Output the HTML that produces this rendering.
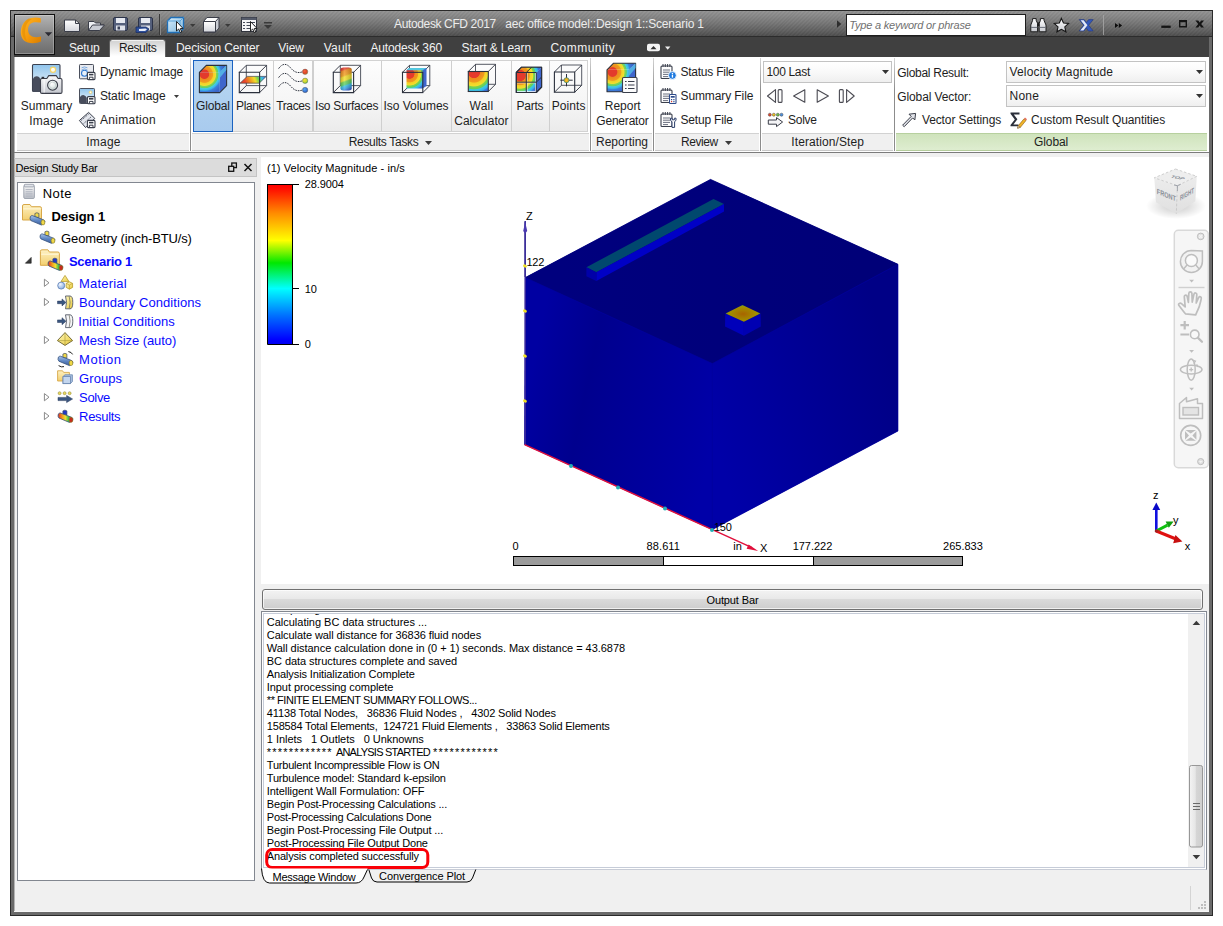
<!DOCTYPE html>
<html lang="en"><head><meta charset="utf-8"><title>Autodesk CFD 2017 - aec office model::Design 1::Scenario 1</title>
<style>
html,body{margin:0;padding:0;background:#fff;}
body{width:1223px;height:926px;position:relative;overflow:hidden;font-family:"Liberation Sans",sans-serif;}
#app,#app div,#app svg,#app .t{position:absolute;}
#app{left:0;top:0;width:1223px;height:926px;overflow:hidden;}
#app .t{white-space:pre;margin:0;padding:0;}
#app div.t span{position:static;}
svg{overflow:visible;display:block;}
</style></head><body><div id="app">
<div style="left:10px;top:10px;width:1203px;height:906px;background:#f0f0f0;"></div>
<div style="left:10px;top:10px;width:1203px;height:27px;background:linear-gradient(#969696 0,#8a8a8a 20%,#767676 50%,#5e5e5e 80%,#4a4a4a 100%);"></div>
<div style="left:10px;top:10px;width:1203px;height:27px;background:repeating-linear-gradient(135deg,rgba(0,0,0,.035) 0,rgba(0,0,0,.035) 1.4px,rgba(255,255,255,.02) 1.4px,rgba(255,255,255,.02) 2.8px);"></div>
<div style="left:10px;top:37px;width:1203px;height:20px;background:#404040;"></div>
<div style="left:10px;top:36px;width:1203px;height:1px;background:#2c2c2c;"></div>
<div style="left:10px;top:10px;width:1203px;height:1px;background:#2a2a2a;"></div>
<div style="left:10px;top:10px;width:1px;height:906px;background:#2a2a2a;"></div>
<div style="left:1212px;top:10px;width:1px;height:906px;background:#2a2a2a;"></div>
<div style="left:10px;top:915px;width:1203px;height:1px;background:#2a2a2a;"></div>
<div style="left:11px;top:37px;width:3px;height:878px;background:#6a6a6a;"></div>
<div style="left:1209px;top:37px;width:3px;height:878px;background:#6a6a6a;"></div>
<div style="left:11px;top:912px;width:1201px;height:3px;background:#6a6a6a;"></div>
<div style="left:14px;top:57px;width:1px;height:855px;background:#b4b4b4;"></div>
<div style="left:14px;top:911px;width:1195px;height:1px;background:#f6f6f6;"></div>
<div style="left:14px;top:37px;width:1px;height:20px;background:#404040;"></div>
<div style="left:14px;top:14px;width:41px;height:41px;background:linear-gradient(#b4b4b4,#8a8a8a 50%,#6c6c6c);border:1px solid #111;box-sizing:border-box;box-shadow:inset 0 0 0 1px rgba(255,255,255,.25);"></div>
<svg style="left:14px;top:14px" width="41" height="41" viewBox="0 0 41 41">
<defs><linearGradient id="gC" x1="0" y1="0" x2="1" y2="1"><stop offset="0" stop-color="#ffb627"/><stop offset=".55" stop-color="#f59a0c"/><stop offset="1" stop-color="#d97d00"/></linearGradient></defs>
<path d="M26.8 4.2 C20 2.2 10.5 3.8 7.6 13 C5.6 19.6 7.2 26.4 13.8 28.6 C18.6 30 23 29.2 27 27.6 L27 22.6 C23 23.4 18.6 23.6 16 21 C13.6 18.6 13.4 13.6 15.6 10.6 C18 7.6 22.6 8 26.8 8.6 Z" fill="url(#gC)"/>
<path d="M14.6 4.6 C9.4 7.6 7.4 14 8.4 20 C9 24 11 27 14 28.4 C10.6 24 10.4 17 12 12 C13 9 15 6.6 18 5 Z" fill="#e08a00" opacity=".55"/>
<path d="M30.800 18.300 L38.200 18.300 L34.500 22.300 Z" fill="#2b2b33"/>
</svg>
<svg style="left:60px;top:12px" width="220" height="24" viewBox="60 12 220 24">
<defs>
<linearGradient id="gW" x1="0" y1="0" x2="0" y2="1"><stop offset="0" stop-color="#ffffff"/><stop offset="1" stop-color="#d4d6dc"/></linearGradient>
<linearGradient id="gB" x1="0" y1="0" x2="1" y2="1"><stop offset="0" stop-color="#d9eefb"/><stop offset="1" stop-color="#7db6dd"/></linearGradient>
</defs>
<!-- new -->
<path d="M64.5 20 L75.5 20 L79.5 23.5 L79.5 31.5 L64.5 31.5 Z" fill="url(#gW)" stroke="#3a3d48" stroke-width="1"/>
<path d="M75.5 20 L75.5 23.5 L79.5 23.5" fill="none" stroke="#3a3d48" stroke-width="1"/>
<!-- open -->
<path d="M88.5 21.5 L94 21.5 L95.5 23 L100.5 23 L100.5 25 L104 25 L99.5 30.5 L88.5 30.5 Z" fill="#eef0f4" stroke="#3a3d48" stroke-width="1"/>
<path d="M92.5 25 L104.5 25 L99.5 30.5 L88.5 30.5 Z" fill="#c9ccd4" stroke="#3a3d48" stroke-width="1"/>
<!-- save -->
<rect x="113.5" y="17.5" width="14" height="13" rx="1.5" fill="#55607c" stroke="#2c3348"/>
<rect x="116" y="18" width="9" height="5" fill="#e6e9f0"/>
<rect x="116" y="25.5" width="9" height="5" fill="#dfe2ea"/>
<rect x="117.5" y="26.5" width="2.5" height="3" fill="#3a4259"/>
<!-- save as -->
<rect x="138.5" y="17.5" width="14" height="13" rx="1.5" fill="#55607c" stroke="#2c3348"/>
<rect x="141" y="18" width="9" height="5" fill="#e6e9f0"/>
<rect x="141" y="25.5" width="9" height="5" fill="#dfe2ea"/>
<path d="M136 27 L146 27 L149 29 L146 32.5 L136 32.5 Z" fill="#2d4f9a" stroke="#1b2e66" stroke-width=".8"/>
<path d="M139 29 L145.5 28.5 L147 29.6 L145 31 L139 31 Z" fill="#e8edf8"/>
<!-- separator -->
<rect x="159" y="14" width="1" height="21" fill="#3a3a3a"/><rect x="160" y="14" width="1" height="21" fill="#8a8a8a"/>
<!-- cube with cursor -->
<path d="M167.500 21 L171 17.500 L183.500 17.500 L183.500 28.500 L180 32.500 L167.500 32.500 Z" fill="url(#gB)" stroke="#1f6fb8" stroke-width="1.3"/>
<path d="M167.500 21 L180 21 L183.500 17.500 M180 21 L180 32.500" fill="none" stroke="#5aa2d8" stroke-width="1"/>
<path d="M176.500 21.500 L176.500 31 L178.700 29 L180.300 32.600 L181.800 32 L180.300 28.600 L183 28.400 Z" fill="#fff" stroke="#111" stroke-width=".9"/>
<path d="M190 24 L195.500 24 L192.750 27 Z" fill="#3a3a3a"/>
<!-- cube white -->
<path d="M203.500 21.500 L207 17.500 L219 17.500 L219 28 L215.500 32 L203.500 32 Z" fill="#c8cbd2" stroke="#3a3d48" stroke-width="1"/>
<path d="M203.500 21.500 L215.500 21.500 L215.500 32 L203.500 32 Z" fill="url(#gW)" stroke="#3a3d48" stroke-width="1"/>
<path d="M203.500 21.500 L207 17.500 L219 17.500 L215.500 21.500 Z" fill="#fdfdfd" stroke="#3a3d48" stroke-width="1"/>
<path d="M225 24 L230.500 24 L227.750 27 Z" fill="#3a3a3a"/>
<!-- list with cursor -->
<rect x="241.500" y="17.500" width="15" height="14" fill="#f4f4f6" stroke="#30333c"/>
<rect x="241.500" y="17.500" width="15" height="2.500" fill="#555b6a"/>
<path d="M243 22.500 H245 M246.500 22.500 H255 M243 25.500 H245 M246.500 25.500 H255 M243 28.500 H245 M246.500 28.500 H255" stroke="#444a58" stroke-width="1"/>
<path d="M250.500 21.500 L250.500 31 L252.700 29 L254.300 32.600 L255.800 32 L254.300 28.600 L257 28.400 Z" fill="#fff" stroke="#111" stroke-width=".9"/>
<!-- customize -->
<rect x="264" y="22" width="8" height="1.500" fill="#3a3a3a"/>
<path d="M264 25 L272 25 L268 29 Z" fill="#3a3a3a"/>
</svg>
<span class="t" style="top:16.0px;line-height:16px;font-size:12px;color:#ececec;letter-spacing:-0.374px;left:394.1px;">Autodesk CFD 2017</span>
<span class="t" style="top:16.0px;line-height:16px;font-size:12px;color:#ececec;letter-spacing:-0.177px;left:505.3px;">aec office model::Design 1::Scenario 1</span>
<svg style="left:836px;top:19px" width="6" height="10" viewBox="0 0 6 10"><path d="M1 1.200 L5.300 5 L1 8.800 Z" fill="#2e2e2e"/></svg>
<div style="left:846px;top:14px;width:180px;height:22px;background:#fff;border:1px solid #1e1e1e;box-sizing:border-box;"></div>
<span class="t" style="top:16.8px;line-height:16px;font-size:11px;color:#707070;font-style:italic;letter-spacing:-0.207px;left:849.3px;">Type a keyword or phrase</span>
<svg style="left:1028px;top:12px" width="180" height="24" viewBox="1028 12 180 24">
<defs><linearGradient id="gI" x1="0" y1="0" x2="0" y2="1"><stop offset="0" stop-color="#ffffff"/><stop offset="1" stop-color="#c8cad0"/></linearGradient></defs>
<!-- binoculars -->
<path d="M1030.800 31.800 L1030.800 25 L1032.600 20.400 L1032.600 18.600 L1036.200 18.600 L1036.200 20.400 L1037.600 23.400 L1037.600 31.800 Z" fill="url(#gI)" stroke="#1c1c1c" stroke-width="1"/>
<path d="M1039.200 31.800 L1039.200 23.400 L1040.400 20.400 L1040.400 18.600 L1044 18.600 L1044 20.400 L1046 25 L1046 31.800 Z" fill="url(#gI)" stroke="#1c1c1c" stroke-width="1"/>
<rect x="1037.400" y="22.400" width="2" height="3.600" fill="#1c1c1c"/>
<path d="M1031 27.400 H1037.400 M1039.400 27.400 H1045.800" stroke="#6a6e78" stroke-width="1"/>
<!-- star -->
<path d="M1061.400 18.400 L1063.500 23 L1068.600 23.500 L1064.800 26.900 L1065.900 31.800 L1061.400 29.300 L1056.900 31.800 L1058 26.900 L1054.200 23.500 L1059.300 23 Z" fill="url(#gI)" stroke="#161616" stroke-width="1.100" stroke-linejoin="miter"/>
<!-- X exchange -->
<path d="M1079.200 19.600 L1084.200 19.600 L1086.200 22.600 L1088.600 19.600 L1093.200 19.600 L1088.600 25.200 L1093.200 31 L1088.400 31 L1086.200 27.800 L1084 31 L1079.200 31 L1083.600 25.200 Z" fill="#3558b8" stroke="#22367c" stroke-width=".6"/>
<path d="M1080.200 30.400 L1084.600 25.200 L1080.600 20.200 L1083.600 20.200 L1087.400 25.200 L1083.400 30.400 Z" fill="#e4e9f6"/>
<!-- sep -->
<rect x="1103" y="15" width="1" height="20" fill="#a8a8a8" opacity=".8"/>
<!-- chevrons -->
<path d="M1115 23 L1118.300 25.500 L1115 28 Z M1118.800 23 L1122.100 25.500 L1118.800 28 Z" fill="#0c0c0c"/>
<!-- min max close -->
<rect x="1161.300" y="25.600" width="9.400" height="2.300" fill="#141414"/>
<path d="M1179 20 H1187 V27.500 H1179 Z M1180.400 22.200 V26.100 H1185.600 V22.200 Z" fill="#141414" fill-rule="evenodd"/>
<path d="M1195.400 20.600 H1198.300 L1199.700 22.600 L1201.100 20.600 H1204 L1201.200 24 L1204 27.400 H1201.100 L1199.700 25.400 L1198.300 27.400 H1195.400 L1198.200 24 Z" fill="#141414"/>
</svg>
<div style="left:110px;top:40px;width:55px;height:17px;background:linear-gradient(#ffffff 0,#d4d4d4 9%,#e4e4e4 40%,#ffffff 95%);border-radius:2.5px 2.5px 0 0;box-shadow:0 0 0 1px rgba(255,255,255,.18);"></div>
<span class="t" style="top:39.6px;line-height:16px;font-size:12px;color:#f2f2f2;letter-spacing:-0.152px;left:68.9px;">Setup</span>
<span class="t" style="top:39.6px;line-height:16px;font-size:12px;color:#1a1a1a;letter-spacing:-0.374px;left:118.9px;">Results</span>
<span class="t" style="top:39.6px;line-height:16px;font-size:12px;color:#f2f2f2;letter-spacing:-0.145px;left:176.1px;">Decision Center</span>
<span class="t" style="top:39.6px;line-height:16px;font-size:12px;color:#f2f2f2;letter-spacing:-0.049px;left:278.3px;">View</span>
<span class="t" style="top:39.6px;line-height:16px;font-size:12px;color:#f2f2f2;letter-spacing:0.226px;left:323.7px;">Vault</span>
<span class="t" style="top:39.6px;line-height:16px;font-size:12px;color:#f2f2f2;letter-spacing:-0.166px;left:370.5px;">Autodesk 360</span>
<span class="t" style="top:39.6px;line-height:16px;font-size:12px;color:#f2f2f2;letter-spacing:-0.086px;left:461.5px;">Start &amp; Learn</span>
<span class="t" style="top:39.6px;line-height:16px;font-size:12px;color:#f2f2f2;letter-spacing:0.457px;left:550.5px;">Community</span>
<svg style="left:646px;top:40px" width="26" height="14" viewBox="646 40 26 14">
<rect x="647" y="43.800" width="13" height="7.500" rx="2" fill="#f4f4f4"/>
<path d="M650.500 49.300 L653.500 46 L656.500 49.300 Z" fill="#303030"/>
<path d="M665 46.500 L670.400 46.500 L667.700 49.700 Z" fill="#f0f0f0"/>
</svg>
<div style="left:15px;top:57px;width:1194px;height:95px;background:#fff;"></div>
<div style="left:17px;top:133px;width:172px;height:18px;background:#f0f0f0;border-top:1px solid #d2d2d2;border-bottom:1px solid #c8c8c8;box-sizing:border-box;"></div>
<div style="left:192px;top:133px;width:397px;height:18px;background:#f0f0f0;border-top:1px solid #d2d2d2;border-bottom:1px solid #c8c8c8;box-sizing:border-box;"></div>
<div style="left:592px;top:133px;width:60px;height:18px;background:#f0f0f0;border-top:1px solid #d2d2d2;border-bottom:1px solid #c8c8c8;box-sizing:border-box;"></div>
<div style="left:655px;top:133px;width:104px;height:18px;background:#f0f0f0;border-top:1px solid #d2d2d2;border-bottom:1px solid #c8c8c8;box-sizing:border-box;"></div>
<div style="left:762px;top:133px;width:131px;height:18px;background:#f0f0f0;border-top:1px solid #d2d2d2;border-bottom:1px solid #c8c8c8;box-sizing:border-box;"></div>
<div style="left:896px;top:133px;width:311px;height:18px;background:linear-gradient(#cfe3bc,#deedd0);border-top:1px solid #b7d09f;border-bottom:1px solid #b4cc9c;box-sizing:border-box;"></div>
<div style="left:14px;top:152px;width:1195px;height:1px;background:#7c7c7c;"></div>
<div style="left:190px;top:58px;width:1px;height:93px;background:linear-gradient(#d4d4d4,#8c8c8c 35%);"></div>
<div style="left:590px;top:58px;width:1px;height:93px;background:linear-gradient(#d4d4d4,#8c8c8c 35%);"></div>
<div style="left:653px;top:58px;width:1px;height:93px;background:linear-gradient(#d4d4d4,#8c8c8c 35%);"></div>
<div style="left:760px;top:58px;width:1px;height:93px;background:linear-gradient(#d4d4d4,#8c8c8c 35%);"></div>
<div style="left:894px;top:58px;width:1px;height:93px;background:linear-gradient(#d4d4d4,#8c8c8c 35%);"></div>
<div style="left:193px;top:60px;width:395px;height:72px;background:linear-gradient(#fdfdfd,#f6f6f6 55%,#ebebeb);border:1px solid #d2d2d2;box-sizing:border-box;"></div>
<div style="left:272.5px;top:61px;width:1.5px;height:70px;background:#cfcfcf;"></div>
<div style="left:312.0px;top:61px;width:1.5px;height:70px;background:#cfcfcf;"></div>
<div style="left:380.5px;top:61px;width:1.5px;height:70px;background:#cfcfcf;"></div>
<div style="left:450.5px;top:61px;width:1.5px;height:70px;background:#cfcfcf;"></div>
<div style="left:510.5px;top:61px;width:1.5px;height:70px;background:#cfcfcf;"></div>
<div style="left:548.5px;top:61px;width:1.5px;height:70px;background:#cfcfcf;"></div>
<div style="left:193px;top:60px;width:40px;height:72px;background:linear-gradient(#bcd8f3,#b0d1f0 50%,#a9cbee);border:1px solid #1a62c0;box-sizing:border-box;"></div>
<span class="t" style="top:97.8px;line-height:16px;font-size:12px;color:#1e1e1e;letter-spacing:0.022px;left:20.7px;">Summary</span>
<span class="t" style="top:112.5px;line-height:16px;font-size:12px;color:#1e1e1e;letter-spacing:0.248px;left:29.2px;">Image</span>
<span class="t" style="top:97.8px;line-height:16px;font-size:12px;color:#1e1e1e;letter-spacing:-0.165px;left:196.0px;">Global</span>
<span class="t" style="top:97.8px;line-height:16px;font-size:12px;color:#1e1e1e;letter-spacing:-0.417px;left:236.1px;">Planes</span>
<span class="t" style="top:97.8px;line-height:16px;font-size:12px;color:#1e1e1e;letter-spacing:-0.372px;left:276.2px;">Traces</span>
<span class="t" style="top:97.8px;line-height:16px;font-size:12px;color:#1e1e1e;letter-spacing:-0.300px;left:315.1px;">Iso Surfaces</span>
<span class="t" style="top:97.8px;line-height:16px;font-size:12px;color:#1e1e1e;letter-spacing:-0.034px;left:383.5px;">Iso Volumes</span>
<span class="t" style="top:97.8px;line-height:16px;font-size:12px;color:#1e1e1e;letter-spacing:0.277px;left:469.5px;">Wall</span>
<span class="t" style="top:112.5px;line-height:16px;font-size:12px;color:#1e1e1e;letter-spacing:0.037px;left:454.2px;">Calculator</span>
<span class="t" style="top:97.8px;line-height:16px;font-size:12px;color:#1e1e1e;letter-spacing:-0.263px;left:516.5px;">Parts</span>
<span class="t" style="top:97.8px;line-height:16px;font-size:12px;color:#1e1e1e;letter-spacing:0.057px;left:551.8px;">Points</span>
<span class="t" style="top:97.8px;line-height:16px;font-size:12px;color:#1e1e1e;letter-spacing:-0.022px;left:604.8px;">Report</span>
<span class="t" style="top:112.5px;line-height:16px;font-size:12px;color:#1e1e1e;letter-spacing:-0.203px;left:596.3px;">Generator</span>
<span class="t" style="top:63.8px;line-height:16px;font-size:12px;color:#1e1e1e;left:99.9px;">Dynamic Image</span>
<span class="t" style="top:88.0px;line-height:16px;font-size:12px;color:#1e1e1e;letter-spacing:-0.092px;left:99.9px;">Static Image</span>
<span class="t" style="top:112.0px;line-height:16px;font-size:12px;color:#1e1e1e;letter-spacing:0.314px;left:99.9px;">Animation</span>
<span class="t" style="top:63.8px;line-height:16px;font-size:12px;color:#1e1e1e;letter-spacing:-0.246px;left:680.5px;">Status File</span>
<span class="t" style="top:88.0px;line-height:16px;font-size:12px;color:#1e1e1e;letter-spacing:-0.101px;left:680.5px;">Summary File</span>
<span class="t" style="top:112.0px;line-height:16px;font-size:12px;color:#1e1e1e;letter-spacing:-0.183px;left:680.5px;">Setup File</span>
<span class="t" style="top:112.0px;line-height:16px;font-size:12px;color:#1e1e1e;letter-spacing:-0.306px;left:788.1px;">Solve</span>
<span class="t" style="top:65.2px;line-height:16px;font-size:12px;color:#1e1e1e;letter-spacing:-0.270px;left:897.2px;">Global Result:</span>
<span class="t" style="top:89.2px;line-height:16px;font-size:12px;color:#1e1e1e;letter-spacing:-0.098px;left:897.2px;">Global Vector:</span>
<span class="t" style="top:112.0px;line-height:16px;font-size:12px;color:#1e1e1e;letter-spacing:-0.095px;left:921.9px;">Vector Settings</span>
<span class="t" style="top:112.0px;line-height:16px;font-size:12px;color:#1e1e1e;letter-spacing:-0.086px;left:1031.1px;">Custom Result Quantities</span>
<span class="t" style="top:134.0px;line-height:16px;font-size:12px;color:#1e1e1e;letter-spacing:0.208px;left:86.3px;">Image</span>
<span class="t" style="top:134.0px;line-height:16px;font-size:12px;color:#1e1e1e;letter-spacing:-0.309px;left:348.7px;">Results Tasks</span>
<span class="t" style="top:134.0px;line-height:16px;font-size:12px;color:#1e1e1e;left:596.0px;">Reporting</span>
<span class="t" style="top:134.0px;line-height:16px;font-size:12px;color:#1e1e1e;letter-spacing:-0.393px;left:680.9px;">Review</span>
<span class="t" style="top:134.0px;line-height:16px;font-size:12px;color:#1e1e1e;letter-spacing:0.101px;left:791.3px;">Iteration/Step</span>
<span class="t" style="top:134.0px;line-height:16px;font-size:12px;color:#1e1e1e;letter-spacing:-0.115px;left:1034.1px;">Global</span>
<svg style="left:424.5px;top:140.5px" width="7" height="4" viewBox="0 0 7 4"><path d="M0 0 L7 0 L3.5 4 Z" fill="#3c3c3c"/></svg>
<svg style="left:724.5px;top:140.5px" width="7" height="4" viewBox="0 0 7 4"><path d="M0 0 L7 0 L3.5 4 Z" fill="#3c3c3c"/></svg>
<svg style="left:173.5px;top:94.5px" width="5" height="3" viewBox="0 0 5 3"><path d="M0 0 L5 0 L2.5 3 Z" fill="#3c3c3c"/></svg>
<div style="left:763px;top:61px;width:129px;height:22px;background:linear-gradient(#ffffff,#f9f9f9 50%,#efefef);border:1px solid #c3c3c3;box-sizing:border-box;"></div>
<span class="t" style="top:63.8px;line-height:16px;font-size:12px;color:#1e1e1e;letter-spacing:-0.331px;left:766.5px;">100 Last</span>
<svg style="left:882px;top:70.0px" width="7" height="4" viewBox="0 0 7 4"><path d="M0 0 L7 0 L3.5 4 Z" fill="#333"/></svg>
<div style="left:1006px;top:61px;width:200px;height:22px;background:linear-gradient(#ffffff,#f9f9f9 50%,#efefef);border:1px solid #c3c3c3;box-sizing:border-box;"></div>
<span class="t" style="top:63.8px;line-height:16px;font-size:12px;color:#1e1e1e;letter-spacing:0.165px;left:1009.5px;">Velocity Magnitude</span>
<svg style="left:1196px;top:70.0px" width="7" height="4" viewBox="0 0 7 4"><path d="M0 0 L7 0 L3.5 4 Z" fill="#333"/></svg>
<div style="left:1006px;top:85px;width:200px;height:22px;background:linear-gradient(#ffffff,#f9f9f9 50%,#efefef);border:1px solid #c3c3c3;box-sizing:border-box;"></div>
<span class="t" style="top:87.8px;line-height:16px;font-size:12px;color:#1e1e1e;letter-spacing:0.228px;left:1009.5px;">None</span>
<svg style="left:1196px;top:94.0px" width="7" height="4" viewBox="0 0 7 4"><path d="M0 0 L7 0 L3.5 4 Z" fill="#333"/></svg>
<svg style="left:15px;top:57px" width="1193" height="95" viewBox="15 57 1193 95">
<defs>
<radialGradient id="rGlobal" gradientUnits="userSpaceOnUse" cx="204.4" cy="74.2" r="20.5"><stop offset="0" stop-color="#e33a2c"/><stop offset=".21" stop-color="#e33a2c"/><stop offset=".25" stop-color="#ec8a1e"/><stop offset=".40" stop-color="#f09c20"/><stop offset=".44" stop-color="#f2d028"/><stop offset=".55" stop-color="#f0de30"/><stop offset=".59" stop-color="#86d450"/><stop offset=".66" stop-color="#62d068"/><stop offset=".70" stop-color="#48cce0"/><stop offset=".78" stop-color="#3ab8ea"/><stop offset=".84" stop-color="#3c80dc"/><stop offset="1" stop-color="#3c66c8"/></radialGradient>
<radialGradient id="rIsoV" gradientUnits="userSpaceOnUse" cx="409.5" cy="73.8" r="19.5"><stop offset="0" stop-color="#e53a2c"/><stop offset=".24" stop-color="#e53a2c"/><stop offset=".27" stop-color="#ee8a1c"/><stop offset=".42" stop-color="#f09a1e"/><stop offset=".46" stop-color="#f4d026"/><stop offset=".58" stop-color="#f2de2c"/><stop offset=".62" stop-color="#7fd24a"/><stop offset=".70" stop-color="#5fd060"/><stop offset=".74" stop-color="#3fc8e0"/><stop offset=".83" stop-color="#35b4ea"/><stop offset=".88" stop-color="#3a78dc"/><stop offset="1" stop-color="#3a62c8"/></radialGradient>
<radialGradient id="rWall" gradientUnits="userSpaceOnUse" cx="474" cy="72" r="24"><stop offset="0" stop-color="#e53a2c"/><stop offset=".24" stop-color="#e53a2c"/><stop offset=".27" stop-color="#ee8a1c"/><stop offset=".42" stop-color="#f09a1e"/><stop offset=".46" stop-color="#f4d026"/><stop offset=".58" stop-color="#f2de2c"/><stop offset=".62" stop-color="#7fd24a"/><stop offset=".70" stop-color="#5fd060"/><stop offset=".74" stop-color="#3fc8e0"/><stop offset=".83" stop-color="#35b4ea"/><stop offset=".88" stop-color="#3a78dc"/><stop offset="1" stop-color="#3a62c8"/></radialGradient>
<radialGradient id="rParts" gradientUnits="userSpaceOnUse" cx="520" cy="75.5" r="22"><stop offset="0" stop-color="#e53a2c"/><stop offset=".24" stop-color="#e53a2c"/><stop offset=".27" stop-color="#ee8a1c"/><stop offset=".42" stop-color="#f09a1e"/><stop offset=".46" stop-color="#f4d026"/><stop offset=".58" stop-color="#f2de2c"/><stop offset=".62" stop-color="#7fd24a"/><stop offset=".70" stop-color="#5fd060"/><stop offset=".74" stop-color="#3fc8e0"/><stop offset=".83" stop-color="#35b4ea"/><stop offset=".88" stop-color="#3a78dc"/><stop offset="1" stop-color="#3a62c8"/></radialGradient>
<radialGradient id="rRep" gradientUnits="userSpaceOnUse" cx="612.5" cy="72" r="21"><stop offset="0" stop-color="#e33a2c"/><stop offset=".21" stop-color="#e33a2c"/><stop offset=".25" stop-color="#ec8a1e"/><stop offset=".40" stop-color="#f09c20"/><stop offset=".44" stop-color="#f2d028"/><stop offset=".55" stop-color="#f0de30"/><stop offset=".59" stop-color="#86d450"/><stop offset=".66" stop-color="#62d068"/><stop offset=".70" stop-color="#48cce0"/><stop offset=".78" stop-color="#3ab8ea"/><stop offset=".84" stop-color="#3c80dc"/><stop offset="1" stop-color="#3c66c8"/></radialGradient>
<linearGradient id="lSky" x1="0" y1="0" x2="0" y2="1"><stop offset="0" stop-color="#8fc4ec"/><stop offset=".7" stop-color="#dcebf8"/><stop offset="1" stop-color="#f2f6fb"/></linearGradient>
<linearGradient id="lCam" x1="0" y1="0" x2="0" y2="1"><stop offset="0" stop-color="#fafafb"/><stop offset="1" stop-color="#c4c7ce"/></linearGradient>
<linearGradient id="lCyl" gradientUnits="userSpaceOnUse" x1="342" y1="66" x2="351" y2="91"><stop offset="0" stop-color="#e0342a"/><stop offset=".14" stop-color="#e23a2c"/><stop offset=".2" stop-color="#ee8a1e"/><stop offset=".36" stop-color="#f0a020"/><stop offset=".42" stop-color="#f2dc2a"/><stop offset=".54" stop-color="#f0e030"/><stop offset=".6" stop-color="#6fd050"/><stop offset=".7" stop-color="#58cc70"/><stop offset=".75" stop-color="#38bfe6"/><stop offset=".85" stop-color="#3a9ae0"/><stop offset=".9" stop-color="#3a70d8"/><stop offset="1" stop-color="#3a5ec4"/></linearGradient>
<linearGradient id="lCylS" x1="0" y1="0" x2="1" y2="0"><stop offset="0" stop-color="#000" stop-opacity=".18"/><stop offset=".35" stop-color="#fff" stop-opacity=".18"/><stop offset="1" stop-color="#000" stop-opacity=".22"/></linearGradient>
<linearGradient id="lPlane" gradientUnits="userSpaceOnUse" x1="246" y1="84" x2="264" y2="76"><stop offset="0" stop-color="#e8452c"/><stop offset=".3" stop-color="#f0a020"/><stop offset=".5" stop-color="#f2dc2a"/><stop offset=".68" stop-color="#6fd050"/><stop offset=".85" stop-color="#38bfe6"/><stop offset="1" stop-color="#4a8ae0"/></linearGradient>
<radialGradient id="bR" cx=".4" cy=".35" r=".7"><stop offset="0" stop-color="#f26a3a"/><stop offset=".6" stop-color="#e0402a"/><stop offset="1" stop-color="#c98a20"/></radialGradient>
<radialGradient id="bY" cx=".4" cy=".35" r=".7"><stop offset="0" stop-color="#f4e23a"/><stop offset=".6" stop-color="#c8d630"/><stop offset="1" stop-color="#4fb848"/></radialGradient>
<radialGradient id="bB" cx=".4" cy=".35" r=".7"><stop offset="0" stop-color="#58a8f0"/><stop offset=".6" stop-color="#3a78d8"/><stop offset="1" stop-color="#2a58b0"/></radialGradient>
<radialGradient id="bP" cx=".5" cy=".5" r=".6"><stop offset="0" stop-color="#f4d42a"/><stop offset=".5" stop-color="#f0a020"/><stop offset=".8" stop-color="#5fd060"/><stop offset="1" stop-color="#38a0e6"/></radialGradient>
<radialGradient id="lens" cx=".4" cy=".35" r=".7"><stop offset="0" stop-color="#ffffff"/><stop offset=".6" stop-color="#dfe8e6"/><stop offset="1" stop-color="#b8c4c2"/></radialGradient>
</defs>
<rect x="32.5" y="64.5" width="27.500" height="27" rx="1" fill="url(#lSky)" stroke="#3c4150" stroke-width="1.1"/>
<path d="M33 92 L33 78.500 Q34.500 76 37 76.200 Q39.500 76.500 40.300 79 L40.300 92 Z" fill="#474c5c"/>
<circle cx="53" cy="69.800" r="2.600" fill="#fffdf0" stroke="#f3d469" stroke-width="1.200"/>
<path d="M40.500 80 Q40.500 78.500 42 78.500 L46.800 78.500 L48.800 75.600 L56.200 75.600 L58.200 78.500 L60.500 78.500 Q62 78.500 62 80 L62 92 Q62 93.400 60.500 93.400 L42 93.400 Q40.500 93.400 40.500 92 Z" fill="url(#lCam)" stroke="#3a3d48" stroke-width="1.1"/>
<rect x="41.600" y="76.800" width="2.600" height="1.800" fill="#2d303a"/>
<rect x="43.600" y="79.500" width="1.100" height="13" fill="#fff" opacity=".8"/>
<circle cx="52.600" cy="85.200" r="5" fill="url(#lens)" stroke="#3a3d48" stroke-width="1.1"/>
<circle cx="52.600" cy="85.200" r="3.100" fill="none" stroke="#c2ccca" stroke-width=".7"/>
<rect x="79.500" y="64.500" width="14" height="14.300" rx=".8" fill="#e9ebf0" stroke="#4a4f5c" stroke-width="1"/>
<circle cx="84.500" cy="73.300" r="3" fill="#e6f0fb" stroke="#2f78d0" stroke-width="1.1"/>
<path d="M81.400 70.200 A4.600 4.600 0 0 1 87.600 70.200 M81.600 67.800 A5.600 5.600 0 0 1 87.400 67.800" fill="none" stroke="#6fa4e0" stroke-width=".9"/>
<rect x="87.4" y="72.4" width="7.6" height="7.2" rx="1" fill="#fff" stroke="#3a3f4c" stroke-width="1.1"/><rect x="89.0" y="73.80000000000001" width="4.4" height="1.6" fill="#3a3f4c"/><path d="M89.4 79.4 L89.4 77.2 L93.0 77.2 L93.0 79.4" fill="none" stroke="#3a3f4c" stroke-width="1"/>
<rect x="79.500" y="88.500" width="15" height="15" rx=".8" fill="url(#lSky)" stroke="#4a4f5c" stroke-width="1"/>
<path d="M80 103 L80 97 Q81.500 94.600 84 95.200 Q86 95.800 86.800 98 L86.800 103 Z" fill="#474c5c"/>
<circle cx="90.500" cy="92.300" r="1.300" fill="#fffdf0" stroke="#f0cf5c" stroke-width=".8"/>
<rect x="87.4" y="96.6" width="7.6" height="7.2" rx="1" fill="#fff" stroke="#3a3f4c" stroke-width="1.1"/><rect x="89.0" y="98.0" width="4.4" height="1.6" fill="#3a3f4c"/><path d="M89.4 103.6 L89.4 101.39999999999999 L93.0 101.39999999999999 L93.0 103.6" fill="none" stroke="#3a3f4c" stroke-width="1"/>
<path d="M79.400 120.500 L88.600 112.400 L94.800 118.400 L85.600 127.600 Z" fill="#e4e7ee" stroke="#3a3f4c" stroke-width="1" stroke-linejoin="round"/>
<path d="M81.200 120.400 L88.700 114 M83.600 123.600 L91.600 116.400" fill="none" stroke="#3a3f4c" stroke-width=".9" stroke-dasharray="1.2 1"/>
<rect x="87.4" y="120.4" width="7.6" height="7.2" rx="1" fill="#fff" stroke="#3a3f4c" stroke-width="1.1"/><rect x="89.0" y="121.80000000000001" width="4.4" height="1.6" fill="#3a3f4c"/><path d="M89.4 127.4 L89.4 125.2 L93.0 125.2 L93.0 127.4" fill="none" stroke="#3a3f4c" stroke-width="1"/>
<path d="M199.4 72.3 L206.3 65.39999999999999 L226.60000000000002 65.39999999999999 L219.70000000000002 72.3 Z" fill="url(#rGlobal)"/><path d="M219.70000000000002 72.3 L226.60000000000002 65.39999999999999 L226.60000000000002 85.69999999999999 L219.70000000000002 92.6 Z" fill="#3f66cc"/><rect x="199.4" y="72.3" width="20.3" height="20.3" fill="url(#rGlobal)"/><path d="M199.4 72.3 L206.3 65.39999999999999 L226.60000000000002 65.39999999999999 L226.60000000000002 85.69999999999999 L219.70000000000002 92.6 L199.4 92.6 Z" fill="none" stroke="#2b303c" stroke-width="1.1" stroke-linejoin="round"/>
<path d="M219.700 72.300 L226.300 65.400 L226.300 70 L219.700 78 Z" fill="#56c0e8" opacity=".8"/>
<g fill="none" stroke="#2b303c" stroke-width="1.1" stroke-linejoin="round"><rect x="246.3" y="65.3" width="20.3" height="20.3" stroke-width=".8"/><path d="M239.3 92.6 L246.3 85.6 M239.3 72.3 L246.3 65.3 M259.6 72.3 L266.6 65.3 M259.6 92.6 L266.6 85.6" stroke-width=".9"/></g>
<path d="M240 83.200 L247.200 76.400 L266.200 76.400 L259.200 83.200 Z" fill="url(#lPlane)" stroke="#2b303c" stroke-width=".6"/>
<path d="M239.300 72.300 h20.300 v20.300 h-20.300 Z" fill="none" stroke="#2b303c" stroke-width="1.1"/>
<path d="M278.600 68.6 C282.500 63.099999999999994 286.500 63.099999999999994 290.500 67.8 C294.500 72.6 298 73.39999999999999 302.500 71.8" fill="none" stroke="#2b303c" stroke-width="1" stroke-dasharray="1.6 1"/>
<circle cx="305.100" cy="71.8" r="2.700" fill="url(#bR)" stroke="#555" stroke-width=".4"/>
<path d="M278.600 77.6 C282.500 72.1 286.500 72.1 290.500 76.8 C294.500 81.6 298 82.39999999999999 302.500 80.8" fill="none" stroke="#2b303c" stroke-width="1" stroke-dasharray="1.6 1"/>
<circle cx="305.100" cy="80.8" r="2.700" fill="url(#bY)" stroke="#555" stroke-width=".4"/>
<path d="M278.600 86.8 C282.500 81.3 286.500 81.3 290.500 86.0 C294.500 90.8 298 91.6 302.500 90" fill="none" stroke="#2b303c" stroke-width="1" stroke-dasharray="1.6 1"/>
<circle cx="305.100" cy="90" r="2.700" fill="url(#bB)" stroke="#555" stroke-width=".4"/>
<g fill="none" stroke="#2b303c" stroke-width="1.1" stroke-linejoin="round"><rect x="340.3" y="65.3" width="20.3" height="20.3" stroke-width=".8"/><path d="M333.3 92.6 L340.3 85.6 M333.3 72.3 L340.3 65.3 M353.6 72.3 L360.6 65.3 M353.6 92.6 L360.6 85.6" stroke-width=".9"/></g>
<rect x="340.500" y="67.400" width="11.200" height="23" rx="3.200" ry="2.200" fill="url(#lCyl)"/>
<rect x="340.500" y="67.400" width="11.200" height="23" rx="3.200" ry="2.200" fill="url(#lCylS)"/>
<path d="M340.500 72.300 H333.300 V92.600 H353.600 V72.300 H351.700" fill="none" stroke="#2b303c" stroke-width="1.1"/>
<g fill="none" stroke="#2b303c" stroke-width="1.1" stroke-linejoin="round"><rect x="409.5" y="65.3" width="20.3" height="20.3" stroke-width=".8"/><path d="M402.5 92.6 L409.5 85.6 M402.5 72.3 L409.5 65.3 M422.8 72.3 L429.8 65.3 M422.8 92.6 L429.8 85.6" stroke-width=".9"/></g>
<path d="M406.500 70.300 L409 68 L426.500 68 L426.500 86 L422.600 88.500 Z" fill="#3f66cc"/>
<path d="M406.500 70.300 L409 68 L426.500 68 L422.600 70.300 Z" fill="#52c8e0"/>
<rect x="406.500" y="70.300" width="16.100" height="18.200" fill="url(#rIsoV)"/>
<rect x="402.500" y="72.300" width="20.300" height="20.300" fill="none" stroke="#2b303c" stroke-width="1.1"/>
<g fill="none" stroke="#2b303c" stroke-width="1.1" stroke-linejoin="round"><rect x="475.5" y="64.3" width="20" height="20" stroke-width=".8"/><path d="M468.3 91.5 L475.5 84.3 M468.3 71.5 L475.5 64.3 M488.3 71.5 L495.5 64.3 M488.3 91.5 L495.5 84.3" stroke-width=".9"/></g>
<rect x="468.300" y="71.500" width="20" height="20" fill="url(#rWall)" stroke="#2b303c" stroke-width="1.1"/>
<path d="M516.3 72.5 L521.5999999999999 67.2 L541.5999999999999 67.2 L536.3 72.5 Z" fill="url(#rParts)"/><path d="M536.3 72.5 L541.5999999999999 67.2 L541.5999999999999 87.2 L536.3 92.5 Z" fill="#3f66cc"/><rect x="516.3" y="72.5" width="20" height="20" fill="url(#rParts)"/><path d="M516.3 72.5 L521.5999999999999 67.2 L541.5999999999999 67.2 L541.5999999999999 87.2 L536.3 92.5 L516.3 92.5 Z" fill="none" stroke="#2b303c" stroke-width="1.1" stroke-linejoin="round"/>
<path d="M516.300 72.500 L521.600 67.200 L541.600 67.200 L536.300 72.500 Z" fill="url(#rParts)"/>
<path d="M527 73 V91.600 M517 82.800 H536 M535.600 73 V91.600 M517 91.400 H536" stroke="#fff" stroke-width="1" opacity=".85" fill="none"/>
<path d="M526.300 72.500 V92.500 M516.300 82.200 H536.300 M526.300 72.500 L531.600 67.200 M536.300 82.200 L541.600 77 M516.300 72.500 H536.300 V92.500" stroke="#2b303c" stroke-width="1" fill="none"/>
<path d="M516.300 72.500 L521.600 67.200 L541.600 67.200 L541.600 87.200 L536.300 92.500 L516.300 92.500 Z" fill="none" stroke="#2b303c" stroke-width="1.1" stroke-linejoin="round"/>
<g fill="none" stroke="#2b303c" stroke-width="1.1" stroke-linejoin="round"><rect x="561.4" y="65" width="20.3" height="20.3" stroke-width=".8"/><path d="M554.4 92.3 L561.4 85.3 M554.4 72 L561.4 65 M574.6999999999999 72 L581.6999999999999 65 M574.6999999999999 92.3 L581.6999999999999 85.3" stroke-width=".9"/><rect x="554.4" y="72" width="20.3" height="20.3"/></g>
<path d="M560.300 80.200 H572.700 M566.500 74 V86.400" stroke="#2b303c" stroke-width="1"/>
<circle cx="566.500" cy="80.200" r="2.600" fill="url(#bP)" stroke="#555" stroke-width=".4"/>
<path d="M607 69.8 L613.6 63.199999999999996 L635.6 63.199999999999996 L629 69.8 Z" fill="url(#rRep)"/><path d="M629 69.8 L635.6 63.199999999999996 L635.6 85.2 L629 91.8 Z" fill="#3f66cc"/><rect x="607" y="69.8" width="22" height="22" fill="url(#rRep)"/><path d="M607 69.8 L613.6 63.199999999999996 L635.6 63.199999999999996 L635.6 85.2 L629 91.8 L607 91.8 Z" fill="none" stroke="#2b303c" stroke-width="1.1" stroke-linejoin="round"/>
<path d="M629 69.800 L635.600 63.200 L635.600 68 L629 76 Z" fill="#56c0e8" opacity=".8"/>
<rect x="622.500" y="77.500" width="14.500" height="15" rx="1" fill="#fbfbfc" stroke="#3a3f4c" stroke-width="1.1"/>
<path d="M625 81.500 h1.600 M628 81.500 h6.500 M625 85 h1.600 M628 85 h6.500 M625 88.500 h1.600 M628 88.500 h6.500" stroke="#3a3f4c" stroke-width="1.1"/>
<rect x="661" y="66" width="11" height="12.5" rx="1" fill="#fdfdfd" stroke="#3a3f4c" stroke-width="1.1"/><path d="M663 64 V67 M665.3 64 V67 M667.6 64 V67 M669.9 64 V67" stroke="#3a3f4c" stroke-width="1"/><path d="M663 70 H670 M663 72.2 H670 M663 74.4 H670 M663 76.6 H668" stroke="#5a6070" stroke-width=".9"/>
<circle cx="672.400" cy="75.400" r="3.900" fill="#1f7ae0" stroke="#fff" stroke-width=".8"/><rect x="671.800" y="74.600" width="1.300" height="3" fill="#fff"/><rect x="671.800" y="72.800" width="1.300" height="1.200" fill="#fff"/>
<rect x="661" y="90" width="11" height="12.5" rx="1" fill="#fdfdfd" stroke="#3a3f4c" stroke-width="1.1"/><path d="M663 88 V91 M665.3 88 V91 M667.6 88 V91 M669.9 88 V91" stroke="#3a3f4c" stroke-width="1"/><path d="M663 94 H670 M663 96.2 H670 M663 98.4 H670 M663 100.6 H668" stroke="#5a6070" stroke-width=".9"/>
<rect x="669.500" y="94.500" width="6.500" height="9" rx=".8" fill="#fff" stroke="#2d4a8a" stroke-width="1.100"/><rect x="670.800" y="96" width="3.900" height="1.700" fill="#2d4a8a"/><path d="M671 99.600 h1.200 M673.300 99.600 h1.200 M673.300 101.600 h1.200" stroke="#2d4a8a" stroke-width="1.100"/><rect x="671" y="101" width="1.200" height="1.200" fill="#d8382c"/>
<rect x="661" y="114" width="11" height="12.5" rx="1" fill="#fdfdfd" stroke="#3a3f4c" stroke-width="1.1"/><path d="M663 112 V115 M665.3 112 V115 M667.6 112 V115 M669.9 112 V115" stroke="#3a3f4c" stroke-width="1"/><path d="M663 118 H670 M663 120.2 H670 M663 122.4 H670 M663 124.6 H668" stroke="#5a6070" stroke-width=".9"/>
<path d="M670.500 118.200 L670.500 120.400 L672 121.600 L672 127.400 L674.600 127.400 L674.600 121.600 L676 120.400 L676 118.200 L674.400 118.200 L674.400 119.800 L672.200 119.800 L672.200 118.200 Z" fill="#fff" stroke="#2d3f6a" stroke-width="1"/>
<g fill="#fcfcfc" stroke="#4a4a52" stroke-width="1.100" stroke-linejoin="round">
<path d="M767.500 96 L775.500 89.600 L775.500 102.400 Z"/><rect x="778.200" y="89.600" width="3.800" height="12.800" rx="1"/>
<path d="M793.600 96 L804.800 89.800 L804.800 102.200 Z"/>
<path d="M828.400 96 L817.200 89.800 L817.200 102.200 Z"/>
<rect x="839.400" y="89.600" width="3.800" height="12.800" rx="1"/><path d="M854.200 96 L846.600 89.600 L846.600 102.400 Z"/>
</g>
<circle cx="769.800" cy="114.700" r="1.500" fill="#e0452c" stroke="#444" stroke-width=".5"/>
<circle cx="773.800" cy="114.700" r="1.500" fill="#f0c020" stroke="#444" stroke-width=".5"/>
<circle cx="777.800" cy="114.700" r="1.500" fill="#6cc04a" stroke="#444" stroke-width=".5"/>
<circle cx="781.500" cy="114.700" r="1.500" fill="#4a90e0" stroke="#444" stroke-width=".5"/>
<path d="M768.300 120 L776.500 120 L776.500 117.600 L782.600 122 L776.500 126.600 L776.500 124.200 L768.300 124.200 Z" fill="#f4f4f6" stroke="#3a3d48" stroke-width="1" stroke-linejoin="round"/>
<path d="M902.600 125.200 L911.200 116.400 L909 114.200 L915.600 113.400 L914.800 120 L912.700 117.900 L904.200 126.700 Z" fill="#e2e4ea" stroke="#3a3d48" stroke-width="1" stroke-linejoin="round"/>
<path d="M1010.500 112.500 L1019.500 112.500 L1019.500 114.600 L1013.800 114.600 L1017.400 119.200 L1013.400 124.400 L1018.500 124.400 L1018.500 126.300 L1010.500 126.300 L1010.500 125 L1014.800 119.400 L1010.500 113.800 Z" fill="#2b2f3a"/>
<path d="M1018.400 125.600 L1024 118.800 L1026 120.500 L1020.400 127.300 L1017.600 128.200 Z" fill="#f0b429" stroke="#8a5a10" stroke-width=".6"/>
<path d="M1018.400 125.600 L1020.400 127.300 L1017.600 128.200 Z" fill="#f4e6c8" stroke="#6b4a1a" stroke-width=".5"/>
<path d="M1024 118.800 L1025 117.600 L1027 119.300 L1026 120.500 Z" fill="#e46a5a"/>
</svg>
<div style="left:14px;top:158px;width:243px;height:19px;background:#dcdcdc;border:1px solid #c4c4c4;border-left-color:#b0b0b0;box-sizing:border-box;"></div>
<span class="t" style="top:159.8px;line-height:16px;font-size:11px;color:#000;letter-spacing:-0.226px;left:15.5px;">Design Study Bar</span>
<svg style="left:226px;top:161px" width="28" height="13" viewBox="226 161 28 13">
<rect x="231.800" y="163" width="4.600" height="4.600" fill="none" stroke="#111" stroke-width="1.300"/>
<rect x="228.700" y="166.300" width="5" height="5" fill="#dcdcdc" stroke="#111" stroke-width="1.300"/>
<path d="M244.500 164 L251.500 171 M251.500 164 L244.500 171" stroke="#111" stroke-width="1.500"/>
</svg>
<div style="left:17px;top:182px;width:237.5px;height:699px;background:#fff;border:1px solid #828790;box-sizing:border-box;"></div>
<span class="t" style="top:186.0px;line-height:16px;font-size:13px;color:#000;letter-spacing:0.458px;left:42.7px;">Note</span>
<span class="t" style="top:208.5px;line-height:16px;font-size:13px;color:#000;font-weight:700;letter-spacing:-0.061px;left:51.5px;">Design 1</span>
<span class="t" style="top:230.9px;line-height:16px;font-size:13px;color:#000;letter-spacing:-0.140px;left:61.1px;">Geometry (inch-BTU/s)</span>
<span class="t" style="top:253.9px;line-height:16px;font-size:13px;color:#0a0aff;font-weight:700;letter-spacing:-0.257px;left:68.9px;">Scenario 1</span>
<span class="t" style="top:276.0px;line-height:16px;font-size:13px;color:#0a0aff;letter-spacing:0.219px;left:78.9px;">Material</span>
<span class="t" style="top:295.0px;line-height:16px;font-size:13px;color:#0a0aff;letter-spacing:0.068px;left:79.1px;">Boundary Conditions</span>
<span class="t" style="top:313.8px;line-height:16px;font-size:13px;color:#0a0aff;letter-spacing:0.067px;left:78.3px;">Initial Conditions</span>
<span class="t" style="top:332.9px;line-height:16px;font-size:13px;color:#0a0aff;letter-spacing:-0.073px;left:79.1px;">Mesh Size (auto)</span>
<span class="t" style="top:352.1px;line-height:16px;font-size:13px;color:#0a0aff;letter-spacing:0.561px;left:79.1px;">Motion</span>
<span class="t" style="top:371.0px;line-height:16px;font-size:13px;color:#0a0aff;letter-spacing:0.060px;left:79.1px;">Groups</span>
<span class="t" style="top:390.1px;line-height:16px;font-size:13px;color:#0a0aff;letter-spacing:-0.326px;left:79.1px;">Solve</span>
<span class="t" style="top:408.9px;line-height:16px;font-size:13px;color:#0a0aff;letter-spacing:-0.323px;left:79.1px;">Results</span>
<svg style="left:18px;top:183px" width="120" height="245" viewBox="18 183 120 245">
<defs>
<linearGradient id="tF" x1="0" y1="0" x2="0" y2="1"><stop offset="0" stop-color="#fdf1c4"/><stop offset="1" stop-color="#f3cf6e"/></linearGradient>
<linearGradient id="tP" x1="0" y1="0" x2="0" y2="1"><stop offset="0" stop-color="#a9c4e8"/><stop offset=".5" stop-color="#5f87c4"/><stop offset="1" stop-color="#3d5f9c"/></linearGradient>
<linearGradient id="tR" x1="0" y1="0" x2="1" y2="0"><stop offset="0" stop-color="#e02a1c"/><stop offset=".3" stop-color="#f0a020"/><stop offset=".5" stop-color="#f0e030"/><stop offset=".7" stop-color="#48c048"/><stop offset="1" stop-color="#d02a1c"/></linearGradient>
<linearGradient id="tY" x1="0" y1="0" x2="1" y2="1"><stop offset="0" stop-color="#fff9c0"/><stop offset="1" stop-color="#e8c838"/></linearGradient>
<linearGradient id="tG" x1="0" y1="0" x2="0" y2="1"><stop offset="0" stop-color="#fafafa"/><stop offset="1" stop-color="#b8bcc4"/></linearGradient>
<radialGradient id="tBall" cx=".35" cy=".3" r=".8"><stop offset="0" stop-color="#f4f8ff"/><stop offset="1" stop-color="#7ea6de"/></radialGradient>
</defs>
<rect x="23.800" y="185.300" width="10.600" height="13.200" rx="1.200" fill="url(#tG)" stroke="#9aa0ac" stroke-width=".9"/><rect x="24.300" y="184.300" width="9.600" height="2.600" rx=".8" fill="#dfe2e8" stroke="#8a909c" stroke-width=".7"/><path d="M25.600 189.500 H32.600 M25.600 191.700 H32.600 M25.600 193.900 H32.600 M25.600 196.100 H32.600" stroke="#b4b8c2" stroke-width="1.100"/>
<path d="M22.5 206.0 Q22.5 204.5 24.0 204.5 L30.0 204.5 L31.5 206.7 L40.0 206.7 Q41.5 206.7 41.5 208.3 L41.5 220.0 L22.5 220.0 Z" fill="url(#tF)" stroke="#d8a848" stroke-width="1"/><path d="M23.3 208.9 H40.7" stroke="#fff8dc" stroke-width="1"/>
<path d="M34.9 217 L34.9 213.5 Q36.9 212 38.9 213.5 L38.9 217.5 Z" fill="#f0d848" stroke="#3a4a6a" stroke-width=".7"/><path d="M30.4 216.5 Q29.4 219 30.9 220.6 L41.4 225 Q44.9 224 44.9 221.5 Q44.4 220 42.9 219.6 L32.4 215.6 Q31.0 215.6 30.4 216.5 Z" fill="url(#tP)" stroke="#34507e" stroke-width=".8"/><ellipse cx="43.0" cy="222.4" rx="1.9" ry="2.6" fill="#f0d848" stroke="#8a7a20" stroke-width=".6"/>
<path d="M44.9 235.3 L44.9 231.8 Q46.9 230.3 48.9 231.8 L48.9 235.8 Z" fill="#f0d848" stroke="#3a4a6a" stroke-width=".7"/><path d="M40.4 234.8 Q39.4 237.3 40.9 238.9 L51.4 243.3 Q54.9 242.3 54.9 239.8 Q54.4 238.3 52.9 237.9 L42.4 233.9 Q41.0 233.9 40.4 234.8 Z" fill="url(#tP)" stroke="#34507e" stroke-width=".8"/><ellipse cx="53.0" cy="240.70000000000002" rx="1.9" ry="2.6" fill="#f0d848" stroke="#8a7a20" stroke-width=".6"/>
<path d="M31.200000000000003 257.40000000000003 L31.200000000000003 263.20000000000005 L25.400000000000002 263.20000000000005 Z" fill="#3a3a3a" stroke="#1a1a1a" stroke-width=".6"/>
<path d="M40.4 251.3 Q40.4 249.8 41.9 249.8 L47.9 249.8 L49.4 252.0 L57.9 252.0 Q59.4 252.0 59.4 253.60000000000002 L59.4 265.3 L40.4 265.3 Z" fill="url(#tF)" stroke="#d8a848" stroke-width="1"/><path d="M41.199999999999996 254.20000000000002 H58.599999999999994" stroke="#fff8dc" stroke-width="1"/>
<path d="M52.9 262.4 L52.9 258.9 Q54.9 257.4 56.9 258.9 L56.9 262.9 Z" fill="#2038c8" stroke="#3a4a6a" stroke-width=".7"/><path d="M48.4 261.9 Q47.4 264.4 48.9 266.0 L59.4 270.4 Q62.9 269.4 62.9 266.9 Q62.4 265.4 60.9 265.0 L50.4 261.0 Q49.0 261.0 48.4 261.9 Z" fill="url(#tR)" stroke="#34507e" stroke-width=".8"/><ellipse cx="61.0" cy="267.79999999999995" rx="1.9" ry="2.6" fill="#c82a1c" stroke="#8a7a20" stroke-width=".6"/>
<path d="M44.4 279.2 L49.0 282.8 L44.4 286.40000000000003 Z" fill="#fff" stroke="#8a8a8a" stroke-width="1"/>
<path d="M44.4 298.4 L49.0 302 L44.4 305.6 Z" fill="#fff" stroke="#8a8a8a" stroke-width="1"/>
<path d="M44.4 336.4 L49.0 340 L44.4 343.6 Z" fill="#fff" stroke="#8a8a8a" stroke-width="1"/>
<path d="M44.4 393.59999999999997 L49.0 397.2 L44.4 400.8 Z" fill="#fff" stroke="#8a8a8a" stroke-width="1"/>
<path d="M44.4 412.4 L49.0 416 L44.4 419.6 Z" fill="#fff" stroke="#8a8a8a" stroke-width="1"/>
<path d="M65 275.400 L69 281.600 L61 281.600 Z" fill="url(#tY)" stroke="#b89a28" stroke-width=".8"/><circle cx="61.200" cy="285.600" r="3.500" fill="url(#tBall)" stroke="#5a7eb4" stroke-width=".8"/><path d="M66.200 283.400 L69.400 281.800 L72.600 283.400 L72.600 287.400 L69.400 289.200 L66.200 287.400 Z" fill="url(#tY)" stroke="#b89a28" stroke-width=".8"/><path d="M66.200 283.400 L69.400 285 L72.600 283.400 M69.400 285 V289.200" fill="none" stroke="#b89a28" stroke-width=".6"/>
<path d="M57.500 301.09999999999997 H62 V298.9 L66 302.4 L62 305.9 V303.7 H57.500 Z" fill="#3a5680" stroke="#26385a" stroke-width=".5"/><path d="M65.500 296.0 H70 Q72.800 296.0 72.800 302.4 Q72.800 308.79999999999995 70 308.79999999999995 H65.500 Q67.600 302.4 65.500 296.0 Z" fill="url(#tY)" stroke="#555a66" stroke-width=".9"/><path d="M69.200 296.4 Q71 302.4 69.200 308.4" fill="none" stroke="#6a6a5a" stroke-width=".7"/>
<path d="M57.500 319.9 H62 V317.7 L66 321.2 L62 324.7 V322.5 H57.500 Z" fill="#3a5680" stroke="#26385a" stroke-width=".5"/><path d="M65.500 314.8 H70 Q72.800 314.8 72.800 321.2 Q72.800 327.59999999999997 70 327.59999999999997 H65.500 Q67.600 321.2 65.500 314.8 Z" fill="#f6f6f8" stroke="#555a66" stroke-width=".9"/><path d="M69.200 315.2 Q71 321.2 69.200 327.2" fill="none" stroke="#6a6a5a" stroke-width=".7"/>
<path d="M65 332.600 L72.600 340.600 L65 345.400 L57.400 340.600 Z" fill="url(#tY)" stroke="#6a6030" stroke-width=".9" stroke-linejoin="round"/><path d="M65 332.600 V345.400 M57.400 340.600 H72.600" fill="none" stroke="#a89838" stroke-width=".6"/>
<path d="M62.9 357.6 L62.9 354.1 Q64.9 352.6 66.9 354.1 L66.9 358.1 Z" fill="#f0d848" stroke="#3a4a6a" stroke-width=".7"/><path d="M58.4 357.1 Q57.4 359.6 58.9 361.20000000000005 L69.4 365.6 Q72.9 364.6 72.9 362.1 Q72.4 360.6 70.9 360.20000000000005 L60.4 356.20000000000005 Q59.0 356.20000000000005 58.4 357.1 Z" fill="url(#tP)" stroke="#34507e" stroke-width=".8"/><ellipse cx="71.0" cy="363.0" rx="1.9" ry="2.6" fill="#f0d848" stroke="#8a7a20" stroke-width=".6"/>
<path d="M68.400 351.600 Q71.600 352 72.600 354.400 M58.600 365.600 Q61.400 367.600 64 366.600" fill="none" stroke="#222" stroke-width="1"/>
<path d="M57.600 370.800 H62.600 L63.600 372.400 H69.400 V381 H57.600 Z" fill="url(#tF)" stroke="#d8a848" stroke-width=".9"/><path d="M63 376.600 L65 374.800 H72.400 V381.600 L70.400 383.600 H63 Z" fill="#a8c0e0" stroke="#6a86b0" stroke-width=".8"/><rect x="63" y="376.600" width="7.400" height="7" fill="#c4d6ee" stroke="#6a86b0" stroke-width=".8"/>
<circle cx="59.600" cy="393.200" r="1.500" fill="#e8d860" stroke="#8a8030" stroke-width=".5"/><circle cx="64.600" cy="393.200" r="1.500" fill="#e8d860" stroke="#8a8030" stroke-width=".5"/><circle cx="69.600" cy="393.200" r="1.500" fill="#e8d860" stroke="#8a8030" stroke-width=".5"/><path d="M58 397.400 H66.600 V395.400 L72.600 399 L66.600 402.600 V400.600 H58 Z" fill="#3a5680" stroke="#26385a" stroke-width=".5"/>
<path d="M62.9 414.4 L62.9 410.9 Q64.9 409.4 66.9 410.9 L66.9 414.9 Z" fill="#2038c8" stroke="#3a4a6a" stroke-width=".7"/><path d="M58.4 413.9 Q57.4 416.4 58.9 418.0 L69.4 422.4 Q72.9 421.4 72.9 418.9 Q72.4 417.4 70.9 417.0 L60.4 413.0 Q59.0 413.0 58.4 413.9 Z" fill="url(#tR)" stroke="#34507e" stroke-width=".8"/><ellipse cx="71.0" cy="419.79999999999995" rx="1.9" ry="2.6" fill="#c82a1c" stroke="#8a7a20" stroke-width=".6"/>
</svg>
<div style="left:261px;top:157px;width:948px;height:427px;background:#fff;"></div>
<span class="t" style="top:160.0px;line-height:16px;font-size:11px;color:#000;letter-spacing:0.078px;left:266.9px;">(1) Velocity Magnitude - in/s</span>
<svg style="left:261px;top:157px" width="947" height="427" viewBox="261 157 947 427">
<defs>
<linearGradient id="cb" x1="0" y1="0" x2="0" y2="1">
<stop offset="0" stop-color="#ff0000"/><stop offset=".03" stop-color="#ff1000"/><stop offset=".18" stop-color="#ff8c00"/><stop offset=".35" stop-color="#ffff00"/><stop offset=".49" stop-color="#00e800"/><stop offset=".65" stop-color="#00ffff"/><stop offset=".82" stop-color="#0070ff"/><stop offset=".97" stop-color="#0000ff"/><stop offset="1" stop-color="#0000f0"/></linearGradient>
<linearGradient id="fL" gradientUnits="userSpaceOnUse" x1="525" y1="400" x2="713" y2="440"><stop offset="0" stop-color="#0000a2"/><stop offset=".3" stop-color="#00008e"/><stop offset="1" stop-color="#0000a8"/></linearGradient>
<linearGradient id="fR" gradientUnits="userSpaceOnUse" x1="713" y1="440" x2="898" y2="380"><stop offset="0" stop-color="#0000a8"/><stop offset=".3" stop-color="#00009e"/><stop offset="1" stop-color="#000086"/></linearGradient>
<linearGradient id="fT" gradientUnits="userSpaceOnUse" x1="560" y1="280" x2="860" y2="250"><stop offset="0" stop-color="#00007e"/><stop offset="1" stop-color="#000078"/></linearGradient>
<radialGradient id="hot" gradientUnits="userSpaceOnUse" cx="743" cy="314" r="17" gradientTransform="translate(0 157) scale(1 .5)"><stop offset="0" stop-color="#a86400"/><stop offset=".45" stop-color="#a47e00"/><stop offset=".85" stop-color="#a09200"/><stop offset="1" stop-color="#709420"/></radialGradient>
<linearGradient id="vc" x1="0" y1="0" x2="0" y2="1"><stop offset="0" stop-color="#ececec"/><stop offset="1" stop-color="#e0e0e0"/></linearGradient>
<radialGradient id="vsh" cx=".5" cy=".5" r=".5"><stop offset="0" stop-color="#000" stop-opacity=".22"/><stop offset="1" stop-color="#000" stop-opacity="0"/></radialGradient>
</defs>
<rect x="268" y="184.500" width="24.500" height="160" fill="url(#cb)"/>
<path d="M267.500 184 V344.500 H299 M292.500 184 V344.500 M267 184.500 H299 M292.500 288.500 H299" fill="none" stroke="#000" stroke-width="1"/>
<path d="M710.500 179.400 L898 264.300 L898 431 L712.400 529.600 L524.600 444.600 L525.300 277.600 Z" fill="#000090"/>
<path d="M710.500 179.400 L898 264.300 L712.400 363.600 L525.300 277.600 Z" fill="url(#fT)" stroke="#00007c" stroke-width=".8"/>
<path d="M525.300 277.600 L712.400 363.600 L712.400 529.600 L524.600 444.600 Z" fill="url(#fL)" stroke="#0000a0" stroke-width=".6"/>
<path d="M712.400 363.600 L898 264.300 L898 431 L712.400 529.600 Z" fill="url(#fR)" stroke="#0000a0" stroke-width=".6"/>
<path d="M586.400 267.300 L713.500 199 L724 204 L596.300 272.200 Z" fill="#00486e"/>
<path d="M596.300 272.200 L724 204 L724 211.600 L596.300 281 Z" fill="#0000c6"/>
<path d="M586.400 267.300 L596.300 272.200 L596.300 281 L586.400 276.200 Z" fill="#0000a8"/>
<path d="M725.300 313.400 L743.900 321.700 L743.900 335.800 L725 326.400 Z" fill="#0000ba"/>
<path d="M743.900 321.700 L760.600 313.400 L760.800 326.400 L743.900 335.800 Z" fill="#0000b2"/>
<path d="M725.600 313.400 L742.500 305 L760.400 313.400 L743.900 321.800 Z" fill="url(#hot)"/>
<path d="M525.200 222 V445" stroke="#3c2a9c" stroke-width="1.400"/>
<path d="M525.200 221 V277" stroke="#3c309a" stroke-width="1.600"/>
<path d="M523.200 231 L525.200 222 L527.200 231 L525.200 233.500 Z" fill="#4a3ab0"/>
<path d="M524.600 444.600 L712.400 529.600 L752 547.600" fill="none" stroke="#e0103c" stroke-width="1.500"/>
<path d="M758.200 551 L746.600 548.800 L748.600 544.400 Z" fill="#e0103c"/>
<ellipse cx="525" cy="266" rx="2" ry="1.500" fill="#f0e020" transform="rotate(25 525 266)"/>
<ellipse cx="525" cy="311" rx="2" ry="1.500" fill="#f0e020" transform="rotate(25 525 311)"/>
<ellipse cx="525" cy="356" rx="2" ry="1.500" fill="#f0e020" transform="rotate(25 525 356)"/>
<ellipse cx="525" cy="401" rx="2" ry="1.500" fill="#f0e020" transform="rotate(25 525 401)"/>
<circle cx="571" cy="466" r="2" fill="#20b0b8"/>
<circle cx="618" cy="487.4" r="2" fill="#20b0b8"/>
<circle cx="665" cy="508.6" r="2" fill="#20b0b8"/>
<circle cx="712" cy="530" r="2" fill="#20b0b8"/>
<rect x="513.500" y="556.500" width="449" height="9" fill="#fff" stroke="#000" stroke-width="1"/>
<rect x="514" y="557" width="149" height="8" fill="#9b9b9b"/><rect x="814" y="557" width="148" height="8" fill="#9b9b9b"/>
<path d="M663.500 556.500 V565.500 M813.500 556.500 V565.500" stroke="#000" stroke-width="1"/>
<ellipse cx="1176" cy="206" rx="30" ry="13" fill="url(#vsh)"/>
<path d="M1175.500 169 L1196.800 176.300 L1177.400 185.700 L1154.300 177.800 Z" fill="#eeeeee"/>
<path d="M1154.300 177.800 L1177.400 185.700 L1176.300 213.700 L1156 202.300 Z" fill="url(#vc)"/>
<path d="M1177.400 185.700 L1196.800 176.300 L1195.300 201.200 L1176.300 213.700 Z" fill="url(#vc)"/>
<path d="M1175.500 169 L1196.800 176.300 L1177.400 185.700 L1154.300 177.800 Z M1177.400 185.700 L1176.300 213.700" fill="none" stroke="#c4c4c4" stroke-width=".8" stroke-dasharray="2.5 2"/>
<path d="M1174 185 L1177.400 185.700 L1180.600 184.400 M1177.400 185.700 V191" fill="none" stroke="#9a9ea6" stroke-width=".9"/>
<text x="0" y="0" font-family="Liberation Sans, sans-serif" font-size="6.500" font-weight="700" fill="#8a8f98" text-anchor="middle" transform="translate(1176.500 178.800) rotate(12) skewX(-38) scale(1 .6)">TOP</text>
<text x="0" y="0" font-family="Liberation Sans, sans-serif" font-size="7.500" font-weight="700" fill="#8a8f98" text-anchor="middle" transform="translate(1166.300 197.600) skewY(22) scale(.74 1)">FRONT</text>
<text x="0" y="0" font-family="Liberation Sans, sans-serif" font-size="7.500" font-weight="700" fill="#8a8f98" text-anchor="middle" transform="translate(1187 196.600) skewY(-30) scale(.6 1)">RIGHT</text>
<rect x="1174.300" y="230.300" width="34" height="237.400" rx="4" fill="#f6f6f6" stroke="#d9d9d9" stroke-width="1.500"/>
<circle cx="1200.700" cy="236.400" r="3.300" fill="#e0e0e0" stroke="#bebebe" stroke-width="1"/><path d="M1199.100 234.800 l3.200 3.200 m0 -3.200 l-3.200 3.200" stroke="#f4f4f4" stroke-width="1.200"/>
<circle cx="1200.700" cy="461.600" r="3.100" fill="#e0e0e0" stroke="#bebebe" stroke-width="1"/><path d="M1198.900 461 h3.600 l-1.800 2 Z" fill="#f4f4f4"/>
<path d="M1180.400 261.500 A11 11 0 1 0 1202.400 261.500 L1202.400 251 L1191.400 250.500 A11 11 0 0 0 1180.400 261.500 Z" fill="#f2f2f2" stroke="#bebebe" stroke-width="1.500"/>
<circle cx="1191.400" cy="260.500" r="6" fill="#fafafa" stroke="#bebebe" stroke-width="1.500"/><path d="M1187 265 l-3.400 4 M1195.800 265 l3.400 4" stroke="#bebebe" stroke-width="1.400"/>
<path d="M1189.200 279.800 h4.800 l-2.400 2.800 Z" fill="#bebebe"/>
<path d="M1178.500 287.500 H1204.500" stroke="#d0d0d0" stroke-width="1.400"/>
<path transform="translate(1190.200 303.300) scale(1.140 1.140) translate(-1190.200 -303.300)" d="M1186 312.500 C1183.500 309.500 1181.500 306.500 1180.200 305 C1179.400 303.600 1181.400 302.600 1182.800 303.800 L1185.800 306.500 L1185 297.500 C1185 295.700 1187.300 295.700 1187.600 297.400 L1188.600 302.500 L1189 294.600 C1189.200 292.900 1191.500 292.900 1191.700 294.600 L1192 302.300 L1193.500 295.300 C1193.900 293.700 1196.100 294 1196 295.700 L1195.500 303 L1197.600 298.300 C1198.400 296.900 1200.300 297.600 1199.900 299.200 C1199 303.200 1198.600 306.500 1196.500 310 L1195 313.500 Z" fill="#f6f6f6" stroke="#bebebe" stroke-width="1.500" stroke-linejoin="round"/>
<path d="M1184.700 321 V329.500 M1180.400 325.200 H1189 M1180.400 334.500 H1189" stroke="#bebebe" stroke-width="2.200" fill="none"/>
<circle cx="1194.700" cy="334.400" r="4.300" fill="#f8f8f8" stroke="#bebebe" stroke-width="1.600"/><path d="M1197.800 337.600 L1202 341.800" stroke="#bebebe" stroke-width="2.200" stroke-linecap="round"/>
<path d="M1189.200 350 h4.800 l-2.400 2.800 Z" fill="#bebebe"/>
<ellipse cx="1191.200" cy="369.600" rx="10.800" ry="4.300" fill="none" stroke="#bebebe" stroke-width="1.500"/><ellipse cx="1191.200" cy="369.600" rx="4" ry="10.600" fill="none" stroke="#bebebe" stroke-width="1.500"/>
<path d="M1189.200 369.600 h4 M1191.200 367.600 v4 M1192.400 360 l3 1 l-1.600 2.600 M1196.600 364.400 l1.400 2.600" stroke="#bebebe" stroke-width="1.300" fill="none"/>
<path d="M1189.200 387.800 h4.800 l-2.400 2.800 Z" fill="#bebebe"/>
<path d="M1179.500 418.500 V403.500 L1186.500 397.500 V401.800 L1197.500 398.800 V403.500 H1202.500 V418.500 Z" fill="#f4f4f4" stroke="#bebebe" stroke-width="1.500" stroke-linejoin="round"/><rect x="1183" y="407.500" width="15.500" height="7.500" fill="#e4e4e4" stroke="#bebebe" stroke-width="1.400"/>
<circle cx="1190.700" cy="435.400" r="10" fill="#f6f6f6" stroke="#bebebe" stroke-width="1.600"/>
<path d="M1185.400 430 L1190.700 433.600 L1196 430 Z M1185.400 440.800 L1190.700 437.200 L1196 440.800 Z M1185 431 L1189 435.400 L1185 439.800 Z M1196.400 431 L1192.400 435.400 L1196.400 439.800 Z" fill="#bebebe"/>
<path d="M1156.300 531 V507" stroke="#1010e0" stroke-width="2.600"/><path d="M1152.400 510 L1156.300 502.600 L1160.200 510 Z" fill="#0808c8"/>
<path d="M1156.300 531 L1167.500 525.200" stroke="#10c010" stroke-width="3"/><path d="M1165.600 521.400 L1173.600 521.600 L1168.800 527.800 Z" fill="#10a010"/>
<path d="M1156.300 531 L1176 539" stroke="#e01010" stroke-width="3"/><path d="M1175.400 535 L1182.400 541.400 L1173.200 543.200 Z" fill="#c81010"/>
<circle cx="1156.300" cy="531" r="1.600" fill="#a02020"/>
</svg>
<span class="t" style="top:175.6px;line-height:16px;font-size:11px;color:#000;letter-spacing:-0.109px;left:304.7px;">28.9004</span>
<span class="t" style="top:281.0px;line-height:16px;font-size:11px;color:#000;letter-spacing:-0.125px;left:304.7px;">10</span>
<span class="t" style="top:336.4px;line-height:16px;font-size:11px;color:#000;letter-spacing:0.375px;left:304.7px;">0</span>
<span class="t" style="top:208.4px;line-height:16px;font-size:11px;color:#000;letter-spacing:0.266px;left:526.0px;">Z</span>
<span class="t" style="top:254.4px;line-height:16px;font-size:11px;color:#000;letter-spacing:-0.286px;left:526.5px;">122</span>
<span class="t" style="top:519.0px;line-height:16px;font-size:11px;color:#000;letter-spacing:-0.286px;left:714.0px;">150</span>
<span class="t" style="top:540.4px;line-height:16px;font-size:11px;color:#000;letter-spacing:0.656px;left:760.0px;">X</span>
<span class="t" style="top:538.2px;line-height:16px;font-size:11px;color:#000;letter-spacing:0.375px;left:512.5px;">0</span>
<span class="t" style="top:538.2px;line-height:16px;font-size:11px;color:#000;letter-spacing:0.112px;left:646.5px;">88.611</span>
<span class="t" style="top:538.2px;line-height:16px;font-size:11px;color:#000;letter-spacing:-0.031px;left:733.3px;">in</span>
<span class="t" style="top:538.2px;line-height:16px;font-size:11px;color:#000;letter-spacing:-0.024px;left:792.7px;">177.222</span>
<span class="t" style="top:538.2px;line-height:16px;font-size:11px;color:#000;letter-spacing:-0.009px;left:943.1px;">265.833</span>
<span class="t" style="top:486.8px;line-height:16px;font-size:11px;color:#000;letter-spacing:0.500px;left:1152.9px;">z</span>
<span class="t" style="top:511.8px;line-height:16px;font-size:11px;color:#000;letter-spacing:0.500px;left:1173.1px;">y</span>
<span class="t" style="top:538.4px;line-height:16px;font-size:11px;color:#000;letter-spacing:0.500px;left:1184.8px;">x</span>
<div style="left:262px;top:589px;width:941px;height:21px;background:linear-gradient(#f3f3f3 0,#e9e9e9 45%,#dadada 50%,#cdcdcd 100%);border:1px solid #707070;border-radius:3px;box-sizing:border-box;box-shadow:inset 0 0 0 1px rgba(255,255,255,.7);"></div>
<div class="t" style="top:592.0px;line-height:16px;font-size:11px;color:#000;letter-spacing:-0.120px;left:532.5px;width:400px;text-align:center;"><span>Output Bar</span></div>
<div style="left:261px;top:611px;width:946px;height:259px;background:#fff;border:1px solid #828790;border-bottom-color:#c8ccd6;box-sizing:border-box;box-shadow:inset 0 0 0 1px #fff,inset 0 0 0 2px #c6ccd8;"></div>
<div style="left:264px;top:614px;width:924px;height:253px;overflow:hidden">
<span class="t" style="top:-11.1px;line-height:13px;font-size:11px;color:#000;letter-spacing:0.033px;left:2.8px;white-space:pre;">Computing</span>
<span class="t" style="top:1.9px;line-height:13px;font-size:11px;color:#000;letter-spacing:-0.015px;left:2.8px;white-space:pre;">Calculating BC data structures ...</span>
<span class="t" style="top:14.9px;line-height:13px;font-size:11px;color:#000;letter-spacing:-0.076px;left:2.8px;white-space:pre;">Calculate wall distance for 36836 fluid nodes</span>
<span class="t" style="top:27.9px;line-height:13px;font-size:11px;color:#000;letter-spacing:-0.046px;left:2.8px;white-space:pre;">Wall distance calculation done in (0 + 1) seconds. Max distance = 43.6878</span>
<span class="t" style="top:40.9px;line-height:13px;font-size:11px;color:#000;letter-spacing:-0.060px;left:2.8px;white-space:pre;">BC data structures complete and saved</span>
<span class="t" style="top:53.9px;line-height:13px;font-size:11px;color:#000;letter-spacing:-0.114px;left:2.8px;white-space:pre;">Analysis Initialization Complete</span>
<span class="t" style="top:66.9px;line-height:13px;font-size:11px;color:#000;letter-spacing:-0.073px;left:2.8px;white-space:pre;">Input processing complete</span>
<span class="t" style="top:79.9px;line-height:13px;font-size:11px;color:#000;letter-spacing:-0.449px;left:2.8px;white-space:pre;">** FINITE ELEMENT SUMMARY FOLLOWS...</span>
<span class="t" style="top:92.9px;line-height:13px;font-size:11px;color:#000;letter-spacing:-0.142px;left:2.8px;white-space:pre;">41138 Total Nodes,   36836 Fluid Nodes ,   4302 Solid Nodes</span>
<span class="t" style="top:105.9px;line-height:13px;font-size:11px;color:#000;letter-spacing:-0.184px;left:2.8px;white-space:pre;">158584 Total Elements,  124721 Fluid Elements ,   33863 Solid Elements</span>
<span class="t" style="top:118.9px;line-height:13px;font-size:11px;color:#000;letter-spacing:-0.041px;left:2.8px;white-space:pre;">1 Inlets   1 Outlets   0 Unknowns</span>
<span class="t" style="top:131.9px;line-height:13px;font-size:11px;color:#000;left:2.8px;white-space:pre;"><span style="letter-spacing:1.22px">************</span> <span style="letter-spacing:-.77px">ANALYSIS STARTED</span> <span style="letter-spacing:1.22px">************</span></span>
<span class="t" style="top:144.9px;line-height:13px;font-size:11px;color:#000;letter-spacing:-0.204px;left:2.8px;white-space:pre;">Turbulent Incompressible Flow is ON</span>
<span class="t" style="top:157.9px;line-height:13px;font-size:11px;color:#000;letter-spacing:-0.180px;left:2.8px;white-space:pre;">Turbulence model: Standard k-epsilon</span>
<span class="t" style="top:170.9px;line-height:13px;font-size:11px;color:#000;letter-spacing:-0.081px;left:2.8px;white-space:pre;">Intelligent Wall Formulation: OFF</span>
<span class="t" style="top:183.9px;line-height:13px;font-size:11px;color:#000;letter-spacing:-0.163px;left:2.8px;white-space:pre;">Begin Post-Processing Calculations ...</span>
<span class="t" style="top:196.9px;line-height:13px;font-size:11px;color:#000;letter-spacing:-0.237px;left:2.8px;white-space:pre;">Post-Processing Calculations Done</span>
<span class="t" style="top:209.9px;line-height:13px;font-size:11px;color:#000;letter-spacing:-0.107px;left:2.8px;white-space:pre;">Begin Post-Processing File Output ...</span>
<span class="t" style="top:222.9px;line-height:13px;font-size:11px;color:#000;letter-spacing:-0.166px;left:2.8px;white-space:pre;">Post-Processing File Output Done</span>
<span class="t" style="top:235.9px;line-height:13px;font-size:11px;color:#000;letter-spacing:-0.165px;left:2.8px;white-space:pre;">Analysis completed successfully</span>
</div>
<div style="left:1188px;top:614px;width:16px;height:253px;background:#f0f0f0;"></div>
<svg style="left:1188px;top:612px" width="17" height="254" viewBox="1188 612 17 254">
<defs><linearGradient id="sbt" x1="0" y1="0" x2="1" y2="0"><stop offset="0" stop-color="#f4f4f4"/><stop offset=".45" stop-color="#e6e6e6"/><stop offset=".5" stop-color="#d6d6d6"/><stop offset="1" stop-color="#cfcfcf"/></linearGradient></defs>
<path d="M1192.600 625 L1196.400 620.800 L1200.200 625 Z" fill="#3a3a3a"/>
<path d="M1192.600 855 L1196.400 859.200 L1200.200 855 Z" fill="#3a3a3a"/>
<rect x="1189.500" y="765.500" width="13" height="81.500" rx="2" fill="url(#sbt)" stroke="#979797" stroke-width="1"/>
<path d="M1193 803.500 H1200 M1193 806.500 H1200 M1193 809.500 H1200" stroke="#6a6a6a" stroke-width="1"/>
</svg>
<svg style="left:262px;top:845px" width="172" height="27" viewBox="262 845 172 27"><rect x="266.700" y="849.400" width="161.100" height="18.100" rx="5.500" fill="none" stroke="#fa0008" stroke-width="3"/></svg>
<svg style="left:258px;top:866px" width="230" height="20" viewBox="258 866 230 20">
<path d="M261.500 868.500 Q262.500 883 269.500 883 L356 883 Q361.500 883 364 877 L367.500 869.500 L367.500 868.500 Z" fill="#fff"/>
<path d="M261.500 868.500 Q262.500 883 269.500 883 L356 883 Q361.500 883 364 877 L367.500 869.500" fill="none" stroke="#000" stroke-width="1"/>
<path d="M368.800 869.500 L371.500 878 Q373 882 377 882 L467 882 Q471 882 472.500 878 L475.800 869.500" fill="none" stroke="#000" stroke-width="1"/>
</svg>
<span class="t" style="top:869.0px;line-height:16px;font-size:11px;color:#000;letter-spacing:-0.273px;left:272.5px;">Message Window</span>
<span class="t" style="top:868.0px;line-height:16px;font-size:11px;color:#000;letter-spacing:-0.091px;left:379.1px;">Convergence Plot</span>
<div style="left:1190px;top:886px;width:1px;height:24px;background:#d4d4d4;"></div>
<svg style="left:1196px;top:899px" width="12" height="12" viewBox="0 0 12 12">
<g fill="#bdbdbd"><rect x="8" y="2" width="2" height="2"/><rect x="5" y="5" width="2" height="2"/><rect x="8" y="5" width="2" height="2"/><rect x="2" y="8" width="2" height="2"/><rect x="5" y="8" width="2" height="2"/><rect x="8" y="8" width="2" height="2"/></g></svg>
</div></body></html>
